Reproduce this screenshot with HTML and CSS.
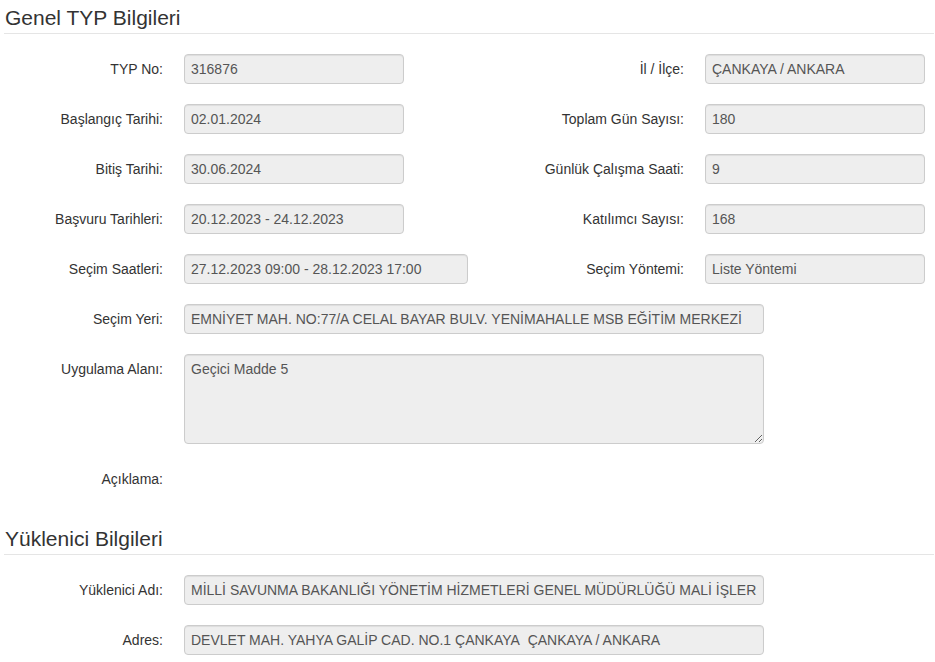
FILE: index.html
```html
<!DOCTYPE html>
<html lang="tr">
<head>
<meta charset="utf-8">
<title>Genel TYP Bilgileri</title>
<link rel="stylesheet" href="styles.css">
</head>
<body>
<div class="page">
  <section class="fieldset">
    <div class="legend">Genel TYP Bilgileri</div>
    <div class="rows">
      <div class="row">
        <div class="pair"><span class="label">TYP No:</span><div class="field">316876</div></div>
        <div class="pair"><span class="label">İl / İlçe:</span><div class="field">ÇANKAYA / ANKARA</div></div>
      </div>
      <div class="row">
        <div class="pair"><span class="label">Başlangıç Tarihi:</span><div class="field">02.01.2024</div></div>
        <div class="pair"><span class="label">Toplam Gün Sayısı:</span><div class="field">180</div></div>
      </div>
      <div class="row">
        <div class="pair"><span class="label">Bitiş Tarihi:</span><div class="field">30.06.2024</div></div>
        <div class="pair"><span class="label">Günlük Çalışma Saati:</span><div class="field">9</div></div>
      </div>
      <div class="row">
        <div class="pair"><span class="label">Başvuru Tarihleri:</span><div class="field">20.12.2023 - 24.12.2023</div></div>
        <div class="pair"><span class="label">Katılımcı Sayısı:</span><div class="field">168</div></div>
      </div>
      <div class="row">
        <div class="pair"><span class="label">Seçim Saatleri:</span><div class="field field-mid">27.12.2023 09:00 - 28.12.2023 17:00</div></div>
        <div class="pair"><span class="label">Seçim Yöntemi:</span><div class="field">Liste Yöntemi</div></div>
      </div>
      <div class="row">
        <div class="pair pair-full"><span class="label">Seçim Yeri:</span><div class="field field-wide">EMNİYET MAH. NO:77/A CELAL BAYAR BULV. YENİMAHALLE MSB EĞİTİM MERKEZİ</div></div>
      </div>
      <div class="row">
        <div class="pair pair-full"><span class="label">Uygulama Alanı:</span><textarea class="area" readonly>Geçici Madde 5</textarea></div>
      </div>
      <div class="row">
        <div class="pair pair-full"><span class="label">Açıklama:</span></div>
      </div>
    </div>
  </section>
  <section class="fieldset second">
    <div class="legend">Yüklenici Bilgileri</div>
    <div class="rows">
      <div class="row">
        <div class="pair pair-full"><span class="label">Yüklenici Adı:</span><div class="field field-wide">MİLLİ SAVUNMA BAKANLIĞI YÖNETİM HİZMETLERİ GENEL MÜDÜRLÜĞÜ MALİ İŞLER</div></div>
      </div>
      <div class="row">
        <div class="pair pair-full"><span class="label">Adres:</span><div class="field field-wide">DEVLET MAH. YAHYA GALİP CAD. NO.1 ÇANKAYA&nbsp; ÇANKAYA / ANKARA</div></div>
      </div>
    </div>
  </section>
</div>
</body>
</html>
```

FILE: styles.css
```css
html, body {
  margin: 0;
  padding: 0;
  background: #fff;
}
body {
  font-family: "Liberation Sans", Arial, sans-serif;
  font-size: 14px;
  line-height: 20px;
  color: #333;
}
.page {
  padding: 3px 1px 0 0;
}
.legend {
  margin-left: 4px;
  font-size: 21px;
  line-height: 30px;
  color: #333;
  padding-left: 1px;
  border-bottom: 1px solid #e5e5e5;
  margin-bottom: 20px;
}
.second {
  margin-top: 30px;
}
.rows {
  display: flex;
  flex-direction: column;
  gap: 20px;
}
.row {
  display: flex;
}
.pair {
  display: flex;
  align-items: flex-start;
  flex: none;
}
.pair:first-child {
  width: 521px;
}
.pair-full:first-child {
  width: auto;
}
.label {
  width: 163px;
  margin-right: 21px;
  text-align: right;
  line-height: 30px;
  white-space: nowrap;
}
.field {
  box-sizing: border-box;
  width: 220px;
  height: 30px;
  padding: 0 6px;
  line-height: 28px;
  border: 1px solid #ccc;
  border-radius: 4px;
  background: #eee;
  color: #555;
  box-shadow: inset 0 1px 1px rgba(0, 0, 0, 0.075);
  white-space: nowrap;
  overflow: hidden;
}
.field-mid {
  width: 284px;
}
.field-wide {
  width: 580px;
}
.area {
  box-sizing: border-box;
  display: block;
  width: 580px;
  height: 90px;
  margin: 0;
  padding: 4px 6px;
  font-family: "Liberation Sans", Arial, sans-serif;
  font-size: 14px;
  line-height: 20px;
  color: #555;
  background: #eee;
  border: 1px solid #ccc;
  border-radius: 4px;
  box-shadow: inset 0 1px 1px rgba(0, 0, 0, 0.075);
  resize: both;
  outline: none;
}
```
